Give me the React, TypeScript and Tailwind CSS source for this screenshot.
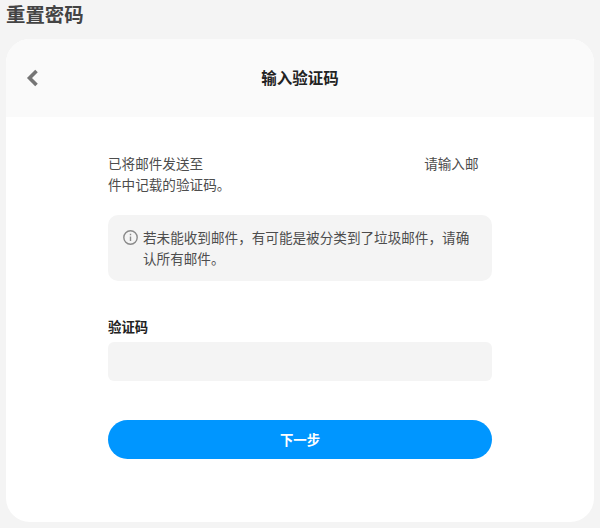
const font = "font-['Noto_Sans_CJK_SC','Noto_Sans',sans-serif]";

function App() {
  return (
    <div className={`w-[600px] h-[528px] bg-[#f4f4f4] px-[6px] overflow-hidden ${font}`}>
      <h1 className="h-[39px] text-[19.4px] leading-[27px] font-bold text-[#444444]">重置密码</h1>
      <div className="w-[588px] h-[483px] bg-white rounded-[24px] overflow-hidden flex flex-col">
        <div className="h-[78px] shrink-0 bg-[#fafafa] flex items-center relative">
          <svg className="absolute left-[19px] top-[29px]" width="15" height="20" viewBox="0 0 15 20" fill="none" stroke="#757575" strokeWidth="3.6">
            <path d="M11.5 3L4.5 10L11.5 17" />
          </svg>
          <h2 className="w-full text-center text-[15.5px] font-bold text-[#222222]">输入验证码</h2>
        </div>
        <div className="px-[102px] pt-[36px] flex flex-col">
          <div className="text-[13.6px] leading-[21px] text-[#4d4d4d] h-[42px]">
            <p className="flex">
              <span>已将邮件发送至</span>
              <span className="ml-[221px]">请输入邮</span>
            </p>
            <p>件中记载的验证码。</p>
          </div>
          <div className="mt-[20px] h-[66px] bg-[#f4f4f4] rounded-[10px] pl-[15px] pr-[16px] pt-[12px] flex gap-[5px]">
            <svg className="mt-[3px] shrink-0" width="15" height="15" viewBox="0 0 15 15" fill="none" stroke="#8a8a8a" strokeWidth="1.4">
              <circle cx="7.5" cy="7.5" r="6.7" />
              <path d="M7.5 6.6v4.4M7.5 3.8v1.5" />
            </svg>
            <p className="text-[13.6px] leading-[21px] text-[#4d4d4d]">若未能收到邮件，有可能是被分类到了垃圾邮件，请确认所有邮件。</p>
          </div>
          <label className="mt-[35px] text-[13.4px] leading-[20px] font-bold text-[#222222]">验证码</label>
          <div className="mt-[6px] h-[39px] bg-[#f4f4f4] rounded-[6px]"></div>
          <button className="mt-[39px] h-[39px] bg-[#0096ff] rounded-full text-white text-[13.4px] font-bold">下一步</button>
        </div>
      </div>
    </div>
  );
}

export default App;
